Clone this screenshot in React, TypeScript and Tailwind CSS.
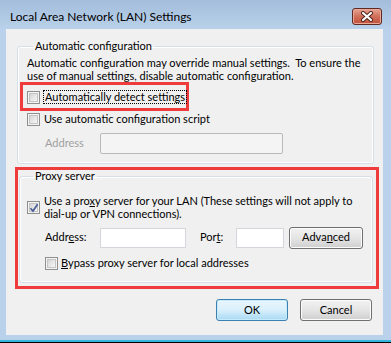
import React from 'react';

function CheckBox({ checked = false }: { checked?: boolean }) {
    return (
        <span className="relative flex h-[13px] w-[13px] shrink-0 items-center justify-center border border-[#8e8f8f] bg-[#f4f4f4]">
            <span className="h-[9px] w-[9px] border border-[#c4c4c4] bg-gradient-to-br from-[#d5d5d5] to-[#f7f7f7]" />
            {checked && (
                <svg className="absolute left-[1px] top-[1px]" width="10" height="10" viewBox="0 0 10 10">
                    <path d="M1.5 5.2 L4 8 L8.6 1.2" fill="none" stroke="#4a5f97" strokeWidth="1.7" />
                </svg>
            )}
        </span>
    );
}

function WinButton({ label, primary = false }: { label: React.ReactNode; primary?: boolean }) {
    return (
        <button
            type="button"
            className={
                primary
                    ? 'flex h-[22px] w-full items-center justify-center rounded-[3px] border border-[#3c7fb1] bg-gradient-to-b from-[#eaf6fd] via-[#d9f0fc] to-[#a7d9f5] text-[11px] text-black shadow-[inset_0_0_0_1px_#c8ebfc]'
                    : 'flex h-[22px] w-full items-center justify-center rounded-[3px] border border-[#707070] bg-gradient-to-b from-[#f2f2f2] via-[#e5e5e5] to-[#cfcfcf] text-[11px] text-black shadow-[inset_0_0_0_1px_#fcfcfc]'
            }
        >
            {label}
        </button>
    );
}

export default function App() {
    return (
        <div className="flex h-[343px] w-[391px] flex-col bg-[#b9d1ea] font-['Lato',sans-serif] text-[11px] text-black">
            {/* title bar */}
            <div className="flex h-[29px] shrink-0 items-start justify-between bg-gradient-to-b from-[#a3bddb] to-[#b9d1ea] pl-[10px] pr-[9px]">
                <span className="mt-[9px] text-[12px] leading-[15px]">Local Area Network (LAN) Settings</span>
                <div className="mt-[8px] flex h-[17px] w-[30px] items-center justify-center rounded-[3px] border border-[#5e2a22] bg-gradient-to-b from-[#e8a493] via-[#cf6f59] to-[#c24f38] shadow-[inset_0_0_0_1px_#eaa898]">
                    <svg width="14" height="11" viewBox="0 0 14 11">
                        <path d="M3 2 L11 9 M11 2 L3 9" stroke="#4a2018" strokeWidth="4" strokeLinecap="round" />
                        <path d="M3 2 L11 9 M11 2 L3 9" stroke="#ffffff" strokeWidth="2.2" strokeLinecap="round" />
                    </svg>
                </div>
            </div>

            {/* client area */}
            <div className="ml-[6px] mr-[8px] flex h-[306px] shrink-0 flex-col bg-[#f0f0f0] pt-[10px]">
                <fieldset className="ml-[11px] w-[357px] rounded-[3px] border border-[#d5dfe5] px-[9px] pb-[9px] shadow-[inset_0_0_0_1px_#ffffff]">
                    <legend className="ml-[6px] px-[2px] leading-[14px]">Automatic configuration</legend>
                    <div className="whitespace-nowrap pt-[3px] leading-[13px]">
                        <div>Automatic configuration may override manual settings.&nbsp; To ensure the</div>
                        <div>use of manual settings, disable automatic configuration.</div>
                    </div>
                    <div className="-ml-[7px] flex h-[29px] w-[169px] items-center border-[3px] border-[#ee3b3b] pl-[4px] pt-[1px]">
                        <CheckBox />
                        <span className="ml-[3px] whitespace-nowrap border border-dotted border-black px-[1px] leading-[12px]">
                            Automatically detect settings
                        </span>
                    </div>
                    <div className="flex h-[16px] items-center">
                        <CheckBox />
                        <span className="ml-[4px] whitespace-nowrap">Use automatic configuration script</span>
                    </div>
                    <div className="mt-[6px] flex h-[21px] items-center">
                        <span className="w-[73px] shrink-0 pl-[18px] text-[#a0a0a0]">Address</span>
                        <div className="h-[21px] w-[183px] rounded-[2px] border border-[#b9b9b9] bg-[#f4f4f4]" />
                    </div>
                </fieldset>

                <div className="ml-[9px] mt-[3px] h-[122px] w-[364px] border-[3px] border-[#ee3b3b] pl-[1px]">
                    <fieldset className="w-[354px] rounded-[3px] border border-[#d5dfe5] pb-[11px] pl-[7px] shadow-[inset_0_0_0_1px_#ffffff]">
                        <legend className="ml-[6px] px-[2px] leading-[12px]">Proxy server</legend>
                        <div className="mt-[12px] flex items-center">
                            <CheckBox checked />
                            <div className="ml-[4px] whitespace-nowrap leading-[13px]">
                                <div>
                                    Use a pro<span className="underline">x</span>y server for your LAN (These settings will not apply to
                                </div>
                                <div>dial-up or VPN connections).</div>
                            </div>
                        </div>
                        <div className="mt-[7px] flex h-[21px] items-center">
                            <span className="w-[73px] shrink-0 pl-[18px]">
                                Addr<span className="underline">e</span>ss:
                            </span>
                            <div className="h-[20px] w-[86px] shrink-0 border border-[#d3d6db] bg-white" />
                            <span className="w-[50px] shrink-0 whitespace-nowrap pl-[14px]">
                                Por<span className="underline">t</span>:
                            </span>
                            <div className="h-[20px] w-[48px] shrink-0 border border-[#d3d6db] bg-white" />
                            <div className="ml-[5px] w-[74px] shrink-0">
                                <WinButton
                                    label={
                                        <span>
                                            Adva<span className="underline">n</span>ced
                                        </span>
                                    }
                                />
                            </div>
                        </div>
                        <div className="mt-[7px] flex h-[16px] items-center pl-[18px]">
                            <CheckBox />
                            <span className="ml-[3px] whitespace-nowrap">
                                <span className="underline">B</span>ypass proxy server for local addresses
                            </span>
                        </div>
                    </fieldset>
                </div>

                <div className="mt-[10px] flex justify-end gap-[12px] pr-[11px]">
                    <div className="w-[72px]">
                        <WinButton label="OK" primary />
                    </div>
                    <div className="w-[72px]">
                        <WinButton label="Cancel" />
                    </div>
                </div>
            </div>

            {/* bottom frame */}
            <div className="h-[5px] shrink-0 bg-[#b9d1ea]" />
            <div className="h-[2px] shrink-0 bg-[#33b5dc]" />
            <div className="h-[1px] shrink-0 bg-black" />
        </div>
    );
}
